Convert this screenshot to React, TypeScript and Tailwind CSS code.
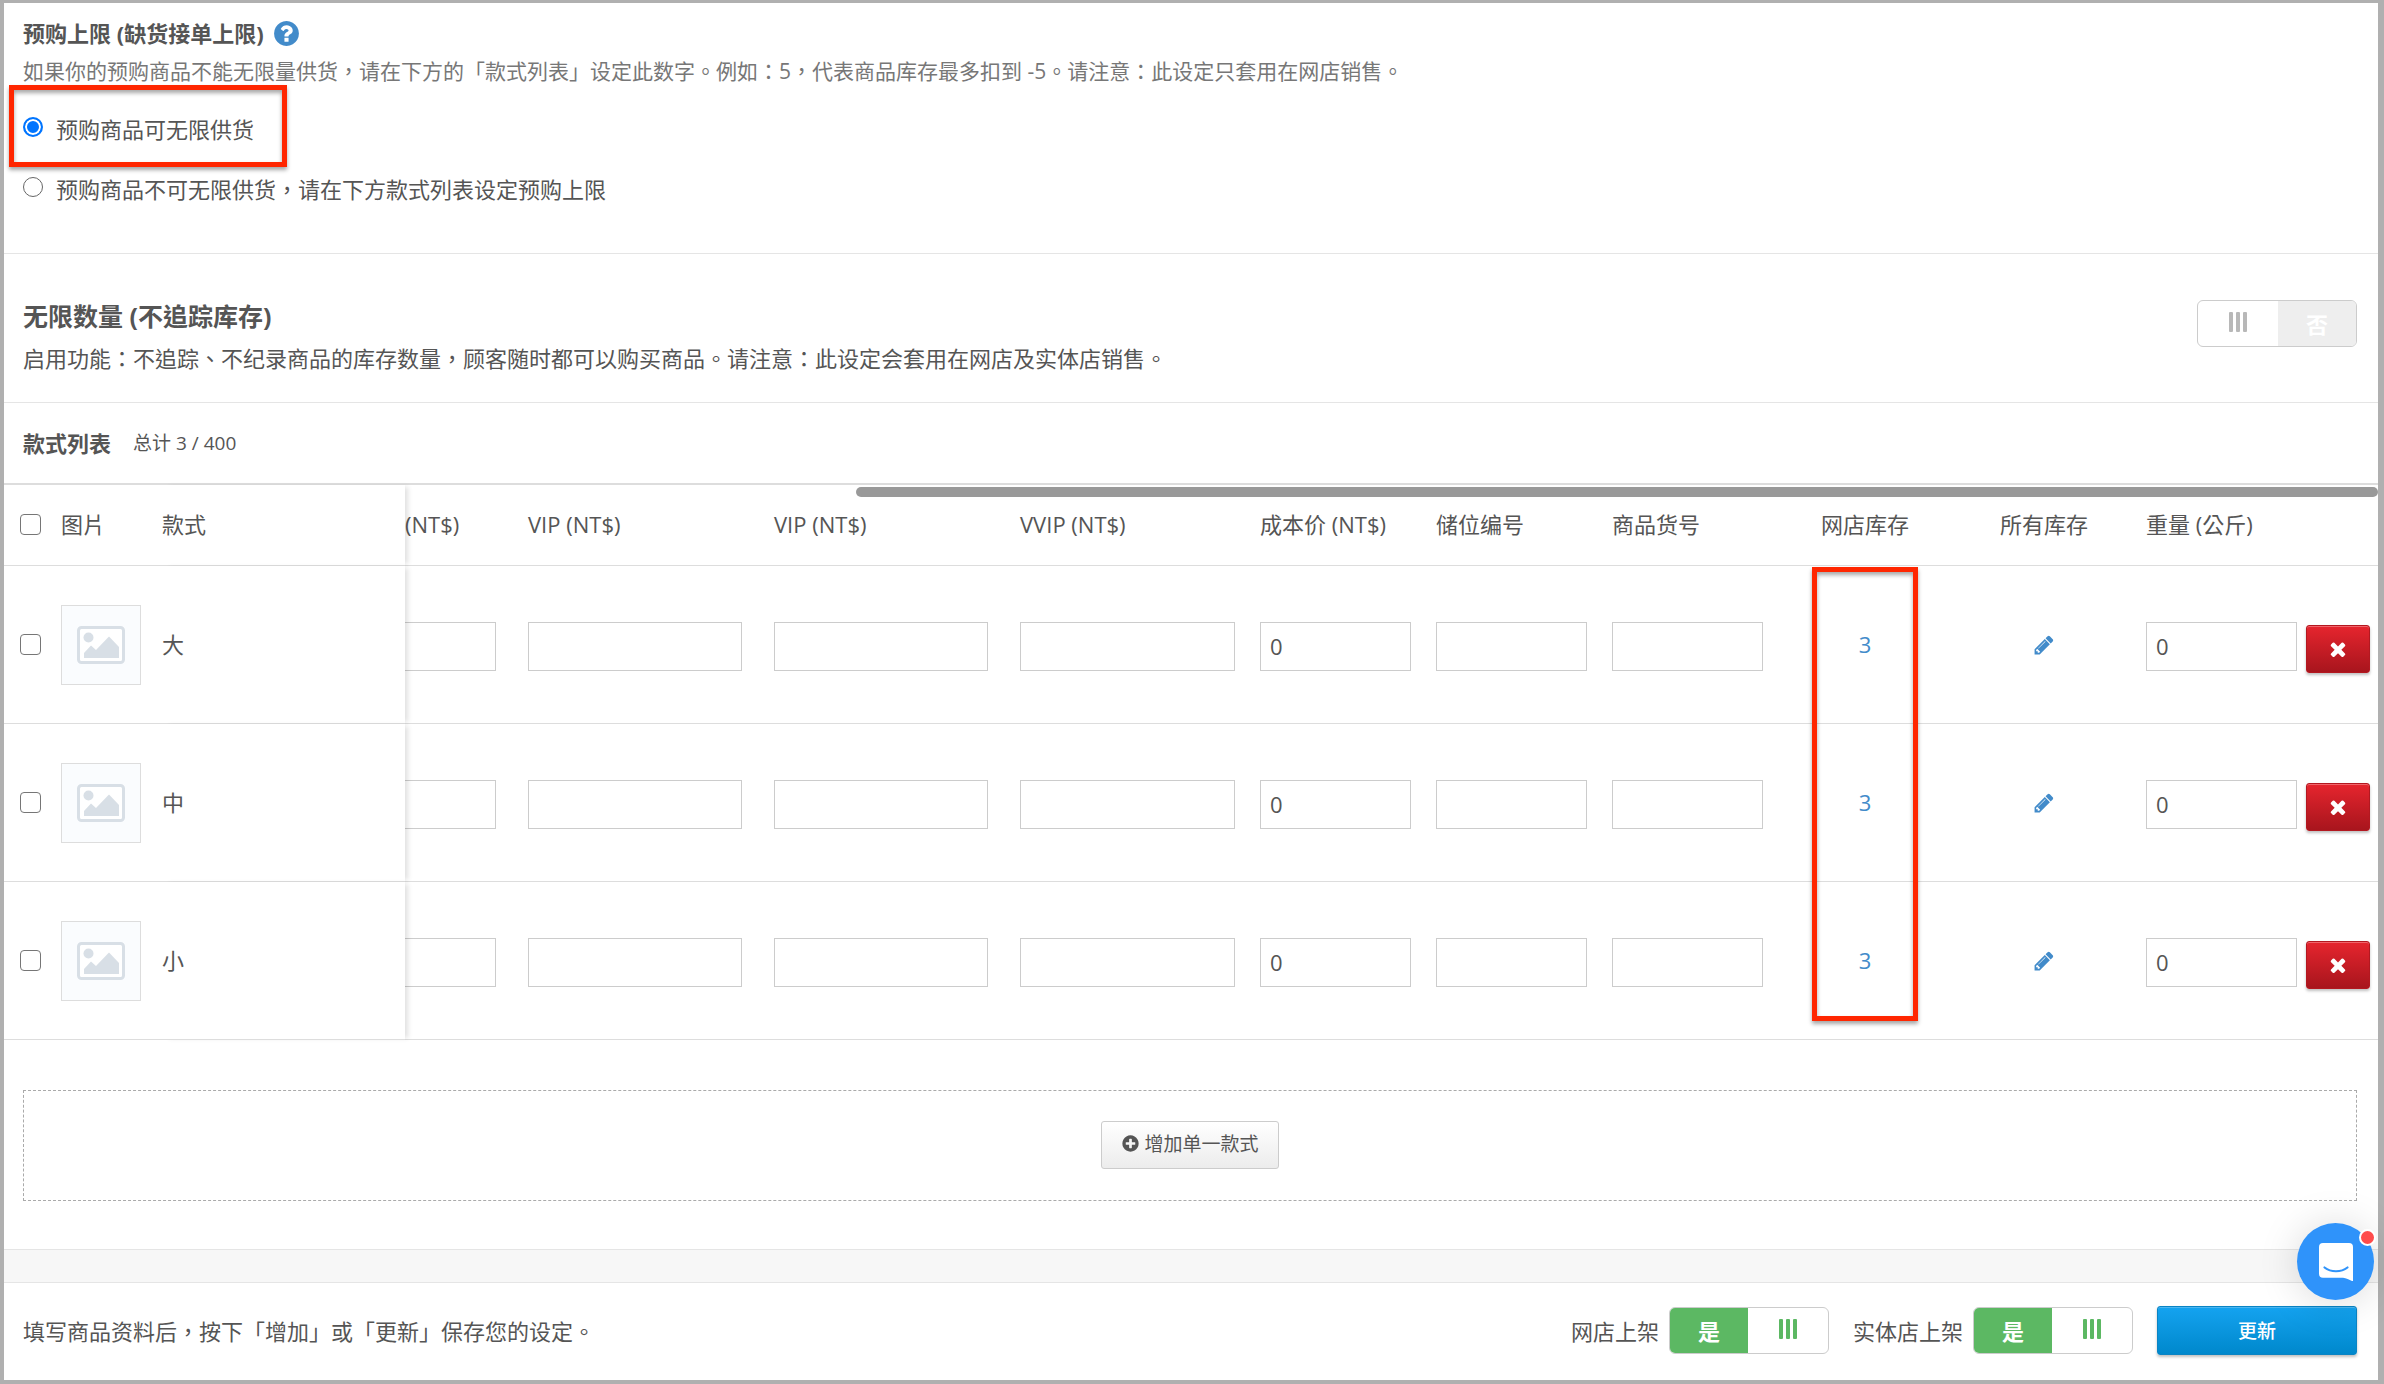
import { useState, type ReactNode } from "react"

const ICONS = {
  question:
    "M1024 1376v-192q0-14-9-23t-23-9h-192q-14 0-23 9t-9 23v192q0 14 9 23t23 9h192q14 0 23-9t9-23zM1280 704q0-88-55.5-163t-138.5-116-170-41q-243 0-371 213-15 24 8 42l132 100q7 6 19 6 16 0 25-12 53-68 86-92 34-24 86-24 48 0 85.5 26t37.5 59q0 38-20 61t-68 45q-63 28-115.5 86.5t-52.5 125.5v36q0 14 9 23t23 9h192q14 0 23-9t9-23q0-19 21.5-49.5t54.5-49.5q32-18 49-28.5t46-35 44.5-48 28-60.5 12.5-81zM1664 896q0 209-103 385.5t-279.5 279.5-385.5 103-385.5-103-279.5-279.5-103-385.5 103-385.5 279.5-279.5 385.5-103 385.5 103 279.5 279.5 103 385.5z",
  plus:
    "M1344 960v-128q0-26-19-45t-45-19h-256v-256q0-26-19-45t-45-19h-128q-26 0-45 19t-19 45v256h-256q-26 0-45 19t-19 45v128q0 26 19 45t45 19h256v256q0 26 19 45t45 19h128q26 0 45-19t19-45v-256h256q26 0 45-19t19-45zM1664 896q0 209-103 385.5t-279.5 279.5-385.5 103-385.5-103-279.5-279.5-103-385.5 103-385.5 279.5-279.5 385.5-103 385.5 103 279.5 279.5 103 385.5z",
  pencil:
    "M491 1536l91-91-235-235-91 91v107h128v128h107zM1014 608q0-22-22-22-10 0-17 7l-542 542q-7 7-7 17 0 22 22 22 10 0 17-7l542-542q7-7 7-17zM960 416l416 416-832 832h-416v-416zM1643 512q0 53-37 90l-166 166-416-416 166-165q36-38 90-38 53 0 91 38l235 234q37 39 37 91z",
  times:
    "M1490 1322q0 40-28 68l-136 136q-28 28-68 28t-68-28l-294-294-294 294q-28 28-68 28t-68-28l-136-136q-28-28-28-68t28-68l294-294-294-294q-28-28-28-68t28-68l136-136q28-28 68-28t68 28l294 294 294-294q28-28 68-28t68 28l136 136q28 28 28 68t-28 68l-294 294 294 294q28 28 28 68z",
}

function Icon({ name, className }: { name: keyof typeof ICONS; className: string }) {
  return (
    <svg viewBox="0 0 1792 1792" fill="currentColor" className={className} aria-hidden="true">
      <path d={ICONS[name]} />
    </svg>
  )
}

function PlaceholderImage() {
  return (
    <svg viewBox="0 0 48 38" className="h-[38px] w-12" aria-hidden="true">
      <rect x="1.5" y="1.5" width="45" height="35" rx="3" fill="#fff" stroke="#d8dfe6" strokeWidth="3" />
      <circle cx="11.5" cy="11.5" r="5" fill="#d8dfe6" />
      <path d="M7 32v-5l7-7.500 5 4.500L32 10.500 42 21v11z" fill="#d8dfe6" />
    </svg>
  )
}

function Bars({ className }: { className: string }) {
  return (
    <svg viewBox="0 0 18 20" fill="currentColor" className={className} aria-hidden="true">
      <rect x="0" width="4" height="20" rx="1" />
      <rect x="7" width="4" height="20" rx="1" />
      <rect x="14" width="4" height="20" rx="1" />
    </svg>
  )
}

function Toggle({ label, initial }: { label: string; initial: boolean }) {
  const [on, setOn] = useState(initial)

  return (
    <button
      type="button"
      role="switch"
      aria-checked={on}
      aria-label={label}
      onClick={() => setOn(!on)}
      className="flex h-[47px] w-40 shrink-0 overflow-hidden rounded-md border border-[#ccc] bg-white text-[22px] font-bold text-white"
    >
      {on && <span className="flex h-full w-[78px] items-center justify-center bg-[#5cb863]">是</span>}
      <span className="flex h-full flex-1 items-center justify-center pb-1">
        <Bars className={on ? "h-5 w-[18px] text-[#5cb863]" : "h-5 w-[18px] text-[#b8b8b8]"} />
      </span>
      {!on && <span className="flex h-full w-[78px] items-center justify-center bg-[#eee]">否</span>}
    </button>
  )
}

function RadioOption({ value, checked, onChange, children }: {
  value: string
  checked: boolean
  onChange: (value: string) => void
  children: ReactNode
}) {
  return (
    <label className="flex w-fit items-center">
      <input
        type="radio"
        name="preorder_limit"
        value={value}
        checked={checked}
        onChange={() => onChange(value)}
        className="mr-[13px] mb-1 size-5 appearance-none rounded-full border border-[#666] bg-white checked:border-2 checked:border-[#0075ff] checked:bg-[#0075ff] checked:shadow-[inset_0_0_0_2px_#fff]"
      />
      {children}
    </label>
  )
}

const checkbox = "block size-[21px] appearance-none rounded-[4px] border border-[#767676] bg-white checked:bg-[#0075ff]"
const input = "block h-[49px] w-full border border-[#ccc] bg-white px-[9px] pb-0.5 text-[22px] text-[#555] outline-none"
const highlight = "pointer-events-none absolute border-[5px] border-[#ff2600] shadow-[0_3px_4px_rgba(0,0,0,0.35),inset_0_3px_4px_rgba(0,0,0,0.35)]"
const frozen = "relative z-10 bg-white"
const frozenEdge = "relative z-10 bg-white shadow-[5px_0_5px_-2px_rgba(0,0,0,0.12)]"

const variations = [
  { id: "large", name: "大", stock: 3 },
  { id: "medium", name: "中", stock: 3 },
  { id: "small", name: "小", stock: 3 },
]

function VariationRow({ id, name, stock, first }: { id: string; name: string; stock: number; first: boolean }) {
  return (
    <tr className="h-[158px] *:border-b *:border-[#ddd]">
      <td className={frozen}>
        <input type="checkbox" aria-label={`选择 ${name}`} className={`ml-4 ${checkbox}`} />
      </td>
      <td className={frozen}>
        <div className="flex size-20 items-center justify-center border border-[#ddd] bg-[#fafcfe]">
          <PlaceholderImage />
        </div>
      </td>
      <td className={`pb-0.5 ${frozenEdge}`}>{name}</td>
      <td>
        <div className="pt-1 pr-8">
          <input aria-label="会员价 (NT$)" name={`${id}_member`} className={`border-l-0 ${input}`} />
        </div>
      </td>
      <td>
        <div className="pt-1 pr-8">
          <input aria-label="VIP (NT$)" name={`${id}_vip1`} className={input} />
        </div>
      </td>
      <td>
        <div className="pt-1 pr-8">
          <input aria-label="VIP (NT$)" name={`${id}_vip2`} className={input} />
        </div>
      </td>
      <td>
        <div className="pt-1 pr-[25px]">
          <input aria-label="VVIP (NT$)" name={`${id}_vvip`} className={input} />
        </div>
      </td>
      <td>
        <div className="pt-1 pr-[25px]">
          <input aria-label="成本价 (NT$)" name={`${id}_cost`} defaultValue="0" className={input} />
        </div>
      </td>
      <td>
        <div className="pt-1 pr-[25px]">
          <input aria-label="储位编号" name={`${id}_location`} className={input} />
        </div>
      </td>
      <td>
        <div className="pt-1 pr-[25px]">
          <input aria-label="商品货号" name={`${id}_sku`} className={input} />
        </div>
      </td>
      <td className="relative pb-0.5 text-center">
        <a href="#stock" className="text-[#428bca]">{stock}</a>
        {/* spans the stock cells of all three rows */}
        {first && <div className={`top-px left-1/2 z-20 h-[454px] w-[106px] -translate-x-1/2 ${highlight}`} />}
      </td>
      <td>
        <a href="#all-stock" aria-label="所有库存" className="flex justify-center text-[#428bca]">
          <Icon name="pencil" className="size-[22px]" />
        </a>
      </td>
      <td>
        <div className="pt-1 pr-[9px]">
          <input aria-label="重量 (公斤)" name={`${id}_weight`} defaultValue="0" className={input} />
        </div>
      </td>
      <td>
        <div className="pt-2 pr-2">
          <button
            type="button"
            aria-label={`删除 ${name}`}
            className="flex h-12 w-full items-center justify-center rounded-[3px] border border-[#b31820] bg-linear-to-b from-[#e6252e] to-[#a8151d] text-white shadow-[0_2px_3px_rgba(0,0,0,0.25),inset_0_1px_0_#f0656b]"
          >
            <Icon name="times" className="size-[22px]" />
          </button>
        </div>
      </td>
    </tr>
  )
}

function VariationTable() {
  return (
    <div className="relative border-t-2 border-[#ddd]">
      <table className="w-full min-w-[1800px] table-fixed border-separate border-spacing-0">
        <colgroup>
          <col className="w-[57px]" />
          <col className="w-[101px]" />
          <col />
          <col className="w-[123px]" />
          <col className="w-[246px]" />
          <col className="w-[246px]" />
          <col className="w-[240px]" />
          <col className="w-[176px]" />
          <col className="w-[176px]" />
          <col className="w-[176px]" />
          <col className="w-[154px]" />
          <col className="w-[204px]" />
          <col className="w-[160px]" />
          <col className="w-[72px]" />
        </colgroup>
        <thead>
          <tr className="h-[81px] text-left *:border-b *:border-[#ddd] *:pb-0.5 *:font-normal">
            <th className={frozen}>
              <input type="checkbox" aria-label="全选" className={`ml-4 ${checkbox}`} />
            </th>
            <th className={frozen}>图片</th>
            <th className={frozenEdge}>款式</th>
            <th>(NT$)</th>
            <th>VIP (NT$)</th>
            <th>VIP (NT$)</th>
            <th>VVIP (NT$)</th>
            <th>成本价 (NT$)</th>
            <th>储位编号</th>
            <th>商品货号</th>
            <th className="text-center">网店库存</th>
            <th className="text-center">所有库存</th>
            <th>重量 (公斤)</th>
            <th></th>
          </tr>
        </thead>
        <tbody>
          {variations.map((item, i) => (
            <VariationRow key={item.id} {...item} first={i === 0} />
          ))}
        </tbody>
      </table>
      {/* overlay scrollbar */}
      <div className="absolute top-0.5 right-0 left-[35.9%] z-20 h-2.5 rounded-full bg-[#999]" />
    </div>
  )
}

function ChatLauncher() {
  return (
    <button
      type="button"
      aria-label="Chat"
      className="fixed right-[10px] bottom-[84px] z-30 flex size-[77px] items-center justify-center rounded-full bg-[#2f93fa] shadow-[0_2px_40px_rgba(0,0,0,0.15)]"
    >
      <svg viewBox="0 0 34 38" className="h-[38px] w-[34px]" aria-hidden="true">
        <path d="M4 0h26a4 4 0 0 1 4 4v34.500c-3-1.500-6.500-3-10-3.700H4a4 4 0 0 1-4-4V4a4 4 0 0 1 4-4z" fill="#fff" />
        <path d="M5.500 24.500c6.500 5 16.500 5 23 0" fill="none" stroke="#2f93fa" strokeWidth="2.200" strokeLinecap="round" />
      </svg>
      <span className="absolute top-1.5 -right-0.5 size-[17px] rounded-full border-2 border-white bg-[#ff4c4c]" />
    </button>
  )
}

export default function App() {
  const [limit, setLimit] = useState("unlimited")

  return (
    <div
      lang="zh-Hant"
      className="flex min-h-screen flex-col border-t-[3px] border-r-[6px] border-b-4 border-l-4 border-[#b0b0b0] bg-white font-['Open_Sans','Noto_Sans_CJK_TC',sans-serif] text-[22px] leading-8 text-[#555]"
    >
      <section className="border-b border-[#e5e5e5] px-[19px] pt-3.5 pb-12">
        <h2 className="flex items-center gap-2 font-bold">
          预购上限 (缺货接单上限)
          <Icon name="question" className="size-[29px] text-[#428bca]" />
        </h2>
        <p className="mt-2 text-[21px] leading-7 text-[#777]">
          如果你的预购商品不能无限量供货，请在下方的「款式列表」设定此数字。例如：5，代表商品库存最多扣到 -5。请注意：此设定只套用在网店销售。
        </p>
        <div className="relative mt-7 flex flex-col gap-7">
          <RadioOption value="unlimited" checked={limit === "unlimited"} onChange={setLimit}>
            预购商品可无限供货
          </RadioOption>
          <RadioOption value="limited" checked={limit === "limited"} onChange={setLimit}>
            预购商品不可无限供货，请在下方款式列表设定预购上限
          </RadioOption>
          <div className={`-top-7 -left-3.5 h-[82px] w-[278px] ${highlight}`} />
        </div>
      </section>

      <section className="flex items-start justify-between border-b border-[#e5e5e5] pt-[46px] pr-[21px] pb-7 pl-[19px]">
        <div>
          <h2 className="text-[25px] font-bold">无限数量 (不追踪库存)</h2>
          <p className="mt-2.5">
            启用功能：不追踪、不纪录商品的库存数量，顾客随时都可以购买商品。请注意：此设定会套用在网店及实体店销售。
          </p>
        </div>
        <Toggle label="无限数量" initial={false} />
      </section>

      <div className="flex h-20 items-center gap-[22px] px-[19px]">
        <h3 className="font-bold">款式列表</h3>
        <span className="text-[19px]">总计 3 / 400</span>
      </div>

      <VariationTable />

      <div className="pt-[50px] pr-[21px] pb-12 pl-[19px]">
        <div className="flex h-[111px] items-center justify-center border border-dashed border-[#aaa] pb-0.5">
          <button
            type="button"
            className="flex h-12 items-center gap-1 rounded-[3px] border border-[#ccc] bg-linear-to-b from-white to-[#ececec] px-[19px] pb-0.5 text-[19px]"
          >
            <Icon name="plus" className="size-[19px]" />
            增加单一款式
          </button>
        </div>
      </div>

      <div className="h-[34px] border-y border-[#e5e5e5] bg-[#f7f7f7]" />

      <footer className="flex flex-1 items-center justify-between rounded-md pr-[21px] pb-0.5 pl-[19px]">
        <p>填写商品资料后，按下「增加」或「更新」保存您的设定。</p>
        <div className="flex items-center">
          <span className="mr-2.5">网店上架</span>
          <Toggle label="网店上架" initial={true} />
          <span className="mr-2.5 ml-6">实体店上架</span>
          <Toggle label="实体店上架" initial={true} />
          <button
            type="submit"
            className="ml-6 h-[49px] w-[200px] rounded-[3px] border border-[#0a84c4] bg-linear-to-b from-[#14a3f0] to-[#0088cc] text-[19px] font-medium text-white shadow-[0_2px_3px_rgba(0,0,0,0.25),inset_0_1px_0_#4bb5f0]"
          >
            更新
          </button>
        </div>
      </footer>

      <ChatLauncher />
    </div>
  )
}
